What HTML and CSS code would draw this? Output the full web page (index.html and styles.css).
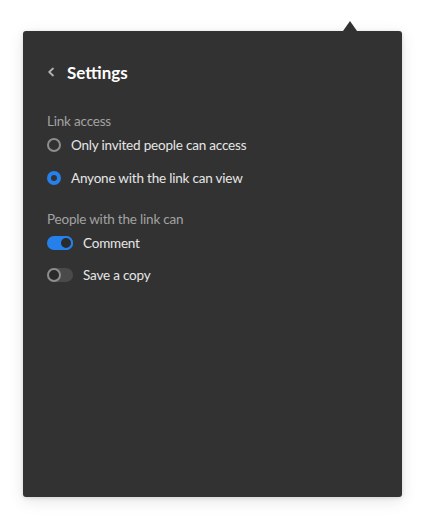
FILE: index.html
```html
<!DOCTYPE html>
<html lang="en">
<head>
<meta charset="utf-8">
<title>Settings</title>
<link rel="stylesheet" href="styles.css">
</head>
<body>
<div class="stage">
  <div class="panel">
    <div class="header">
      <svg class="chev" width="8" height="10" viewBox="0 0 8 10"><path d="M6 1.5 L2.2 5 L6 8.5" fill="none" stroke="#b3b3b3" stroke-width="1.8" stroke-linecap="round" stroke-linejoin="round"/></svg>
      <span class="title">Settings</span>
    </div>
    <div class="label label-first">Link access</div>
    <div class="row row-radio1"><span class="radio"></span><span class="text">Only invited people can access</span></div>
    <div class="row row-radio2"><span class="radio radio-on"></span><span class="text">Anyone with the link can view</span></div>
    <div class="label label-second">People with the link can</div>
    <div class="row row-t1"><span class="toggle toggle-on"><span class="knob"></span></span><span class="text">Comment</span></div>
    <div class="row row-t2"><span class="toggle"><span class="knob"></span></span><span class="text">Save a copy</span></div>
  </div>
</div>
</body>
</html>
```
FILE: styles.css
```css
html, body {
  margin: 0;
  padding: 0;
  background: #ffffff;
}
body {
  font-family: Lato, "Noto Sans", sans-serif;
  width: 426px;
  height: 526px;
  overflow: hidden;
}
.stage {
  padding: 31px 0 0 23px;
}
.panel {
  position: relative;
  width: 379px;
  height: 466px;
  box-sizing: border-box;
  background: #323232;
  border-radius: 3px;
  box-shadow: 0 1px 4px rgba(0,0,0,0.12), 0 4px 16px rgba(0,0,0,0.10);
  padding: 29px 24px 0 24px;
  display: flex;
  flex-direction: column;
}
.panel::before {
  content: "";
  position: absolute;
  top: -10px;
  left: 320px;
  width: 0;
  height: 0;
  border-left: 7px solid transparent;
  border-right: 7px solid transparent;
  border-bottom: 10px solid #323232;
}
.header {
  height: 24px;
  display: flex;
  align-items: center;
}
.chev {
  margin-left: 0;
  margin-right: 12px;
}
.title {
  color: #ffffff;
  font-weight: 700;
  font-size: 17px;
}
.label {
  height: 20px;
  line-height: 20px;
  font-size: 13.5px;
  letter-spacing: -0.2px;
  color: #a2a2a2;
}
.label-first { margin-top: 27px; }
.label-second { margin-top: 19px; }
.row {
  height: 24px;
  display: flex;
  align-items: center;
  font-size: 13.5px;
  letter-spacing: -0.2px;
  color: #e6e6e6;
}
.row-radio1 { margin-top: 2px; }
.row-radio2 { margin-top: 9px; }
.row-t1 { margin-top: 2px; }
.row-t2 { margin-top: 8px; }
.radio {
  width: 14px;
  height: 14px;
  box-sizing: border-box;
  border-radius: 50%;
  border: 2px solid #8e8e8e;
  margin-right: 10px;
  flex: none;
}
.radio-on {
  border: 4px solid #2680eb;
  background: #323232;
}
.toggle {
  position: relative;
  width: 26px;
  height: 14px;
  border-radius: 7px;
  background: #4a4a4a;
  margin-right: 10px;
  flex: none;
}
.knob {
  position: absolute;
  top: 0;
  left: 0;
  width: 14px;
  height: 14px;
  box-sizing: border-box;
  border-radius: 50%;
  border: 2px solid #8e8e8e;
  background: #2a2a2a;
}
.toggle-on {
  background: #2680eb;
}
.toggle-on .knob {
  left: 12px;
  border-color: #2680eb;
  background: #2a2a2a;
}
```
